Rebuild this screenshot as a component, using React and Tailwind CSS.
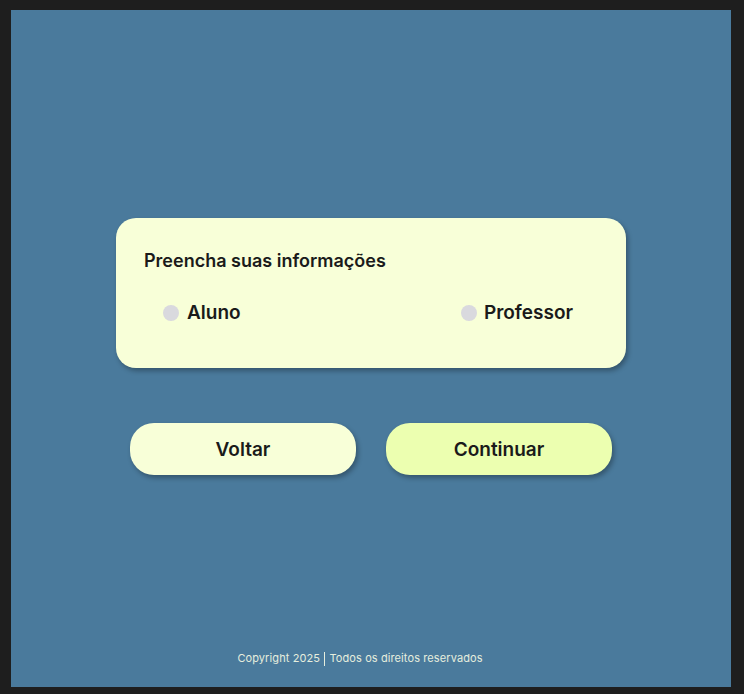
export default function App() {
  return (
    <div className="w-[744px] h-[694px] bg-[#1e1e1e] pl-[11px] pt-[10px]" style={{ fontFamily: "Inter, 'Noto Sans', sans-serif" }}>
      <div className="w-[720px] h-[677px] bg-[#4a7a9c] flex flex-col items-center">
        <div className="mt-[208px] w-[510px] h-[150px] rounded-[20px] bg-[#f8ffd8] shadow-[2px_3px_5px_rgba(0,0,0,0.3)] px-[28px] pt-[32px]">
          <div className="text-[18px] font-semibold text-[#1a1a1a] leading-[22px]">Preencha suas informações</div>
          <div className="flex justify-between mt-[30px] pl-[19px] pr-[25px]">
            <div className="flex items-center gap-[8px]">
              <span className="w-[16px] h-[16px] rounded-full bg-[#d9d9de]"></span>
              <span className="text-[19px] font-semibold text-[#1a1a1a] leading-[22px]">Aluno</span>
            </div>
            <div className="flex items-center gap-[7px]">
              <span className="w-[16px] h-[16px] rounded-full bg-[#d9d9de]"></span>
              <span className="text-[19px] font-semibold text-[#1a1a1a] leading-[22px]">Professor</span>
            </div>
          </div>
        </div>
        <div className="mt-[55px] flex gap-[30px]">
          <button className="w-[226px] h-[52px] rounded-[24px] bg-[#f8ffd8] shadow-[2px_3px_5px_rgba(0,0,0,0.3)] text-[19px] font-semibold text-[#1a1a1a] pt-[2px]">Voltar</button>
          <button className="w-[226px] h-[52px] rounded-[24px] bg-[#ecffb0] shadow-[2px_3px_5px_rgba(0,0,0,0.3)] text-[19px] font-semibold text-[#1a1a1a] pt-[2px]">Continuar</button>
        </div>
        <div className="mt-auto mb-[21px] mr-[22px] text-[11px] tracking-[0.1px] text-[#e6eede] leading-[16px]">
          Copyright 2025 <span className="inline-block w-px h-[14px] bg-[#e6eede] align-middle mx-[1px]"></span> Todos os direitos reservados
        </div>
      </div>
    </div>
  );
}
